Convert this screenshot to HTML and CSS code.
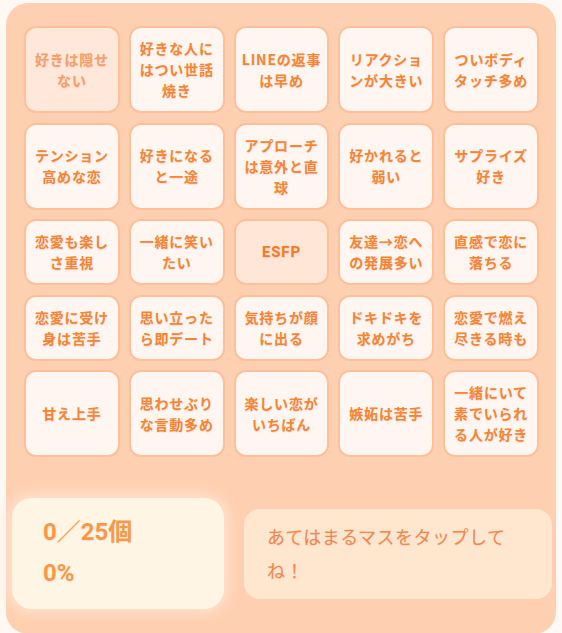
FILE: index.html
```html
<!DOCTYPE html>
<html lang="ja">
<head>
<meta charset="utf-8">
<title>ビンゴ</title>
<link rel="stylesheet" href="styles.css">
</head>
<body>
<div class="board">
  <div class="grid">
    <div class="cell cell-soft">好きは隠せない</div>
    <div class="cell">好きな人にはつい世話焼き</div>
    <div class="cell">LINEの返事は早め</div>
    <div class="cell">リアクションが大きい</div>
    <div class="cell">ついボディタッチ多め</div>

    <div class="cell">テンション高めな恋</div>
    <div class="cell">好きになると一途</div>
    <div class="cell">アプローチは意外と直球</div>
    <div class="cell">好かれると弱い</div>
    <div class="cell">サプライズ好き</div>

    <div class="cell">恋愛も楽しさ重視</div>
    <div class="cell">一緒に笑いたい</div>
    <div class="cell cell-center">ESFP</div>
    <div class="cell">友達→恋への発展多い</div>
    <div class="cell">直感で恋に落ちる</div>

    <div class="cell">恋愛に受け身は苦手</div>
    <div class="cell">思い立ったら即デート</div>
    <div class="cell">気持ちが顔に出る</div>
    <div class="cell">ドキドキを求めがち</div>
    <div class="cell">恋愛で燃え尽きる時も</div>

    <div class="cell">甘え上手</div>
    <div class="cell">思わせぶりな言動多め</div>
    <div class="cell">楽しい恋がいちばん</div>
    <div class="cell">嫉妬は苦手</div>
    <div class="cell">一緒にいて素でいられる人が好き</div>
  </div>

  <div class="stats">
    <div class="score">
      <div class="score-line">0<span class="slash">／</span>25個</div>
      <div class="score-line">0%</div>
    </div>
    <div class="hint">あてはまるマスをタップしてね！</div>
  </div>
</div>
</body>
</html>
```

FILE: styles.css
```css
* {
  box-sizing: border-box;
}

html, body {
  margin: 0;
  padding: 0;
}

body {
  background: #fff8f4;
  font-family: "Noto Sans CJK JP", "Noto Sans", sans-serif;
  padding: 3px 6px 0 6px;
}

.board {
  width: 550px;
  background: #ffcfb1;
  border-radius: 22px;
  padding: 23px 0 25px 0;
}

.grid {
  margin: 0 17px 0 18px;
  display: grid;
  grid-template-columns: repeat(5, 1fr);
  column-gap: 9px;
  row-gap: 9.5px;
}

.cell {
  background: #fff6f1;
  border: 2px solid #ffbf99;
  border-radius: 12px;
  padding: 10px 5px;
  display: flex;
  align-items: center;
  justify-content: center;
  text-align: center;
  font-size: 14px;
  line-height: 21px;
  font-weight: 700;
  letter-spacing: 0.8px;
  color: #f6862f;
  text-shadow: 0 1px 1px rgba(255, 120, 170, 0.25);
}

.cell-soft {
  background: #ffe8da;
  color: #f5a064;
}

.cell-center {
  background: #ffe6d6;
  color: #f67a1f;
  font-family: Roboto, "Noto Sans CJK JP", sans-serif;
  font-size: 15px;
}

.stats {
  margin: 41px 4px 0 6px;
  display: flex;
  align-items: center;
  gap: 20px;
}

.score {
  width: 212px;
  background: #fff5e5;
  border-radius: 20px;
  padding: 14px 31px 18px;
  box-shadow: 0 0 14px 4px rgba(255, 232, 212, 0.85);
  display: flex;
  flex-direction: column;
  gap: 5px;
}

.score-line {
  font-family: Roboto, "Noto Sans CJK JP", sans-serif;
  font-size: 24px;
  line-height: 36px;
  font-weight: 700;
  color: #f69a45;
  text-shadow: 0 1px 1px rgba(255, 120, 170, 0.2);
}

.slash {
  font-family: "Noto Sans CJK JP", sans-serif;
  font-weight: 400;
}

.hint {
  flex: 1;
  background: #ffe6cf;
  border-radius: 16px;
  padding: 10px 40px 12px 23px;
  font-size: 18px;
  line-height: 34px;
  letter-spacing: 0.5px;
  color: #f0894a;
  text-shadow: 0 1px 1px rgba(255, 120, 170, 0.2);
}
```
